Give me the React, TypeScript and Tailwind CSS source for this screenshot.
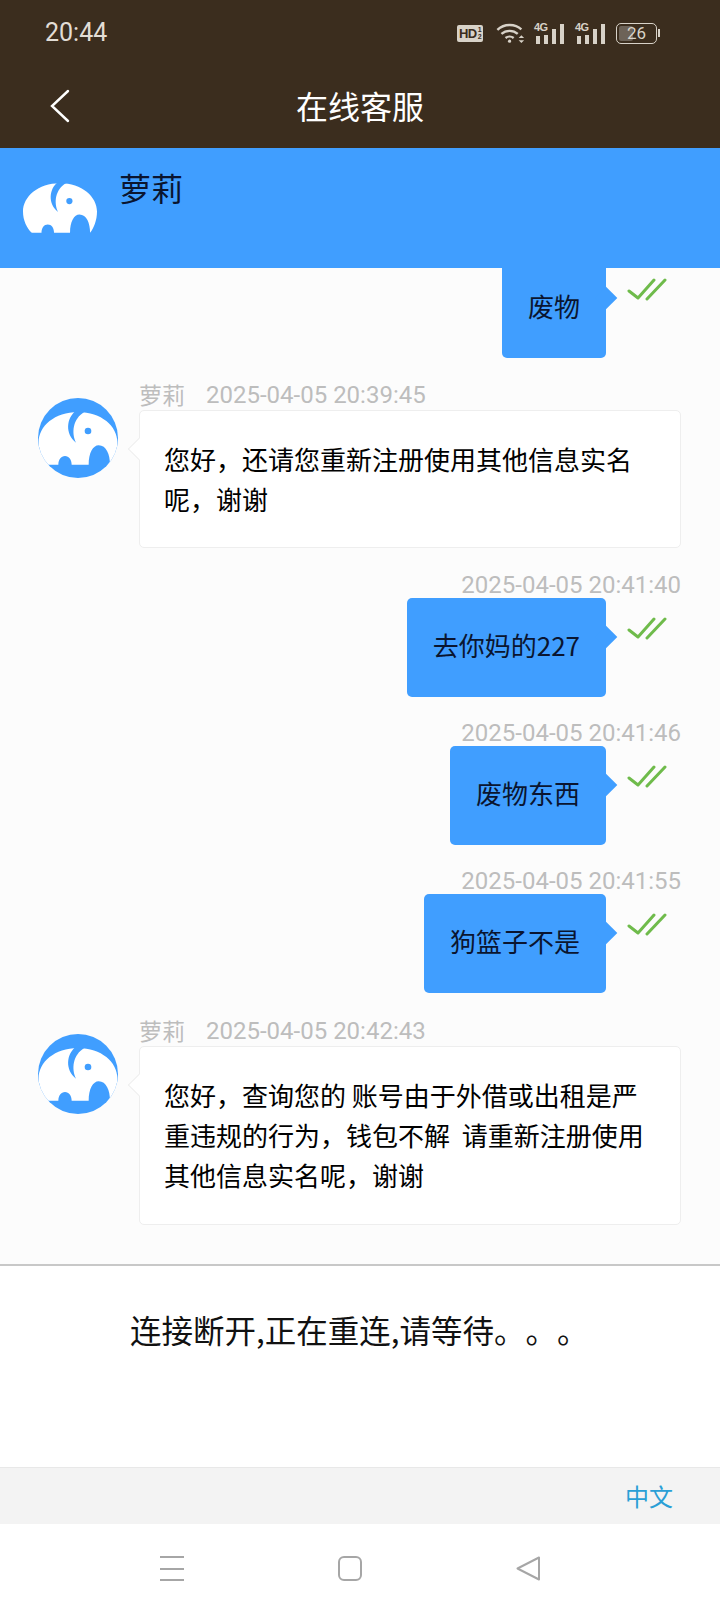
import React from "react";

const cjk = { fontFamily: '"Noto Sans CJK SC", "Noto Sans", sans-serif' };
const BLUE = "#409eff";

const BODY =
  "M2 132C2 85 50 42 120 42C190 42 238 85 238 132C238 160 228 185 216 200C216 170 205 142 182 142C165 142 152 165 152 200L101 200C101 185 93 174 81 174C69 174 61 185 61 200L30 200C14 185 2 160 2 132Z";
const EAR = "M112 40C86 60 80 108 114 134C100 104 104 62 140 41Z";

function ElephantAvatar() {
  return (
    <svg width="80" height="80" viewBox="0 0 240 240" className="shrink-0 rounded-full overflow-hidden bg-[#409eff]">
      <path d={BODY} fill="#fff" />
      <path d={EAR} fill={BLUE} />
      <circle cx="150" cy="99" r="10" fill={BLUE} />
    </svg>
  );
}

function ElephantMark() {
  return (
    <svg width="74" height="54" viewBox="2 42 236 158" className="shrink-0">
      <path d={BODY} fill="#fff" />
      <path d={EAR} fill={BLUE} />
      <circle cx="150" cy="99" r="10" fill={BLUE} />
    </svg>
  );
}

function DoubleCheck() {
  return (
    <svg width="40" height="26" viewBox="0 0 40 26" fill="none" stroke="#6fbb4b" strokeWidth="3" strokeLinecap="round" strokeLinejoin="round">
      <path d="M2 14L11 21L27 3" />
      <path d="M20 22L38 3" />
    </svg>
  );
}

function Signal() {
  return (
    <div className="relative w-[30px] h-[21px]">
      <span className="absolute left-0 top-[-1px] text-[11px] leading-[11px] font-bold tracking-[-0.5px] text-[#d8d2c8]" style={{ fontFamily: '"Liberation Sans", sans-serif' }}>
        4G
      </span>
      <svg width="30" height="21" viewBox="0 0 30 21" fill="#d8d2c8" className="absolute left-0 top-0">
        <rect x="2" y="13" width="4" height="8" />
        <rect x="10" y="12" width="4" height="9" />
        <rect x="18" y="6" width="4" height="15" />
        <rect x="26" y="1" width="4" height="20" />
      </svg>
    </div>
  );
}

function StatusBar() {
  return (
    <div className="h-[66px] flex items-center justify-between pl-[45px] pr-[60px]">
      <span className="text-[25px] text-[#e2ddd6]" style={{ fontFamily: "Roboto, sans-serif" }}>
        20:44
      </span>
      <div className="flex items-center">
        <div className="w-[26px] h-[17px] rounded-[2px] bg-[#d8d2c8] flex items-center justify-center text-[#3b2d1e] text-[13px] font-bold tracking-[-0.5px] leading-none" style={{ fontFamily: '"Liberation Sans", sans-serif' }}>
          HD
          <span className="flex flex-col text-[7px] leading-[7px] ml-[1px]">
            <span>1</span>
            <span>2</span>
          </span>
        </div>
        <svg width="29" height="22" viewBox="0 0 32 24" fill="none" stroke="#d8d2c8" strokeWidth="2.6" className="ml-[13px]">
          <path d="M1.5 8.5C9 1.5 21 1.5 28 8" />
          <path d="M6 13C11 8.5 19 8.5 24 13" />
          <path d="M10.5 17.5C13 15.5 17 15.5 19.5 17.5" />
          <circle cx="15" cy="21" r="1.8" fill="#d8d2c8" stroke="none" />
          <path d="M25 17.5L28 14.5L31 17.5Z M25 20L28 23L31 20Z" fill="#d8d2c8" stroke="none" />
        </svg>
        <div className="ml-[9px]"><Signal /></div>
        <div className="ml-[11px]"><Signal /></div>
        <div className="ml-[11px] flex items-center">
          <div className="w-[41px] h-[21px] rounded-[5px] border-[1.5px] border-[#d8d2c8] p-[2px] relative">
            <div className="h-full w-[40%] bg-[#6d6358] rounded-[2px]" />
            <span className="absolute inset-0 flex items-center justify-center text-[17px] leading-none text-[#d8d2c8]" style={{ fontFamily: "Roboto, sans-serif" }}>
              26
            </span>
          </div>
          <div className="w-[2px] h-[8px] ml-[1px] bg-[#d8d2c8]" />
        </div>
      </div>
    </div>
  );
}

function TitleBar() {
  return (
    <div className="h-[82px] relative flex items-center justify-center pb-[4px]">
      <svg width="22" height="34" viewBox="0 0 22 34" fill="none" stroke="#fff" strokeWidth="2.4" strokeLinecap="round" className="absolute left-[49px] top-[23px]">
        <path d="M19 2L3 17L19 32" />
      </svg>
      <span className="text-[32px] leading-none text-white" style={cjk}>
        在线客服
      </span>
    </div>
  );
}

function Outgoing({ time, text }: { time?: string; text: string }) {
  return (
    <div className="flex flex-col pr-[39px]">
      {time && (
        <div className="h-[30px] leading-[34px] text-[24px] text-[#bdbdbd] text-right" style={{ fontFamily: "Roboto, sans-serif" }}>
          {time}
        </div>
      )}
      <div className="flex justify-end">
        <div className="relative h-[99px] rounded-[5px] bg-[#409eff] px-[26px] pb-[6px] flex items-center text-[26px] text-[#0a1530]" style={cjk}>
          {text}
          <span className="absolute right-[-8px] top-[31px] w-[16px] h-[16px] rotate-45 bg-[#409eff]" />
        </div>
        <div className="w-[75px] pl-[21px] pt-[18px]">
          <DoubleCheck />
        </div>
      </div>
    </div>
  );
}

function Incoming({ time, lines, height }: { time: string; lines: string[]; height: string }) {
  return (
    <div className="flex pl-[38px] pr-[39px]">
      <div className="pt-[18px]">
        <ElephantAvatar />
      </div>
      <div className="ml-[21px] flex-1">
        <div className="h-[30px] text-[24px] text-[#bdbdbd] flex items-start" style={{ fontFamily: "Roboto, sans-serif" }}>
          <span className="text-[23px] leading-[28px]" style={cjk}>萝莉</span>
          <span className="ml-[21px] leading-[30px]">{time}</span>
        </div>
        <div className={`relative rounded-[5px] border-[1.5px] border-[#eeeeee] bg-white pl-[24px] pr-[18px] pt-[28px] text-[26px] leading-[40px] text-black ${height}`} style={cjk}>
          <span className="absolute left-[-9px] top-[30px] w-[16px] h-[16px] rotate-45 bg-white border-l-[1.5px] border-b-[1.5px] border-[#eeeeee]" />
          {lines.map((line) => (
            <div key={line} className="whitespace-pre">
              {line}
            </div>
          ))}
        </div>
      </div>
    </div>
  );
}

function NavBar() {
  return (
    <div className="h-[88px] bg-white flex items-start pt-[32px]">
      <div className="flex w-full pl-[160px] gap-[154px]">
        <svg width="24" height="25" viewBox="0 0 24 25" fill="#a6a6a6">
          <rect x="0" y="0" width="24" height="2" />
          <rect x="0" y="12" width="24" height="2" />
          <rect x="0" y="23" width="24" height="2" />
        </svg>
        <svg width="24" height="25" viewBox="0 0 24 25" fill="none" stroke="#a6a6a6" strokeWidth="2">
          <rect x="1" y="1" width="22" height="23" rx="5" />
        </svg>
        <svg width="24" height="25" viewBox="0 0 24 25" fill="none" stroke="#a6a6a6" strokeWidth="2" strokeLinejoin="round">
          <path d="M23 1.5L23 23.5L1.5 12.5Z" />
        </svg>
      </div>
    </div>
  );
}

export default function App() {
  return (
    <div className="w-[720px] h-[1612px] flex flex-col overflow-hidden bg-white [text-spacing-trim:space-all]">
      <div className="bg-[#3b2d1e] h-[148px] shrink-0">
        <StatusBar />
        <TitleBar />
      </div>
      <div className="h-[120px] shrink-0 bg-[#409eff] flex relative z-10">
        <div className="pl-[23px] pt-[33px]">
          <ElephantMark />
        </div>
        <div className="ml-[22px] pt-[18px] text-[32px] leading-[42px] text-[#0a1530]" style={cjk}>
          萝莉
        </div>
      </div>
      <div className="h-[998px] shrink-0 bg-[#fcfcfc] border-b-[2px] border-[#c8c8c8] overflow-hidden">
        <div className="-mt-[9px] flex flex-col">
          <Outgoing text="废物" />
          <div className="h-[22px]" />
          <Incoming time="2025-04-05 20:39:45" height="h-[138px]" lines={["您好\uFF0C还请您重新注册使用其他信息实名", "呢\uFF0C谢谢"]} />
          <div className="h-[20px]" />
          <Outgoing time="2025-04-05 20:41:40" text="去你妈的227" />
          <div className="h-[19px]" />
          <Outgoing time="2025-04-05 20:41:46" text="废物东西" />
          <div className="h-[19px]" />
          <Outgoing time="2025-04-05 20:41:55" text="狗篮子不是" />
          <div className="h-[23px]" />
          <Incoming time="2025-04-05 20:42:43" height="h-[179px]" lines={["您好\uFF0C查询您的 账号由于外借或出租是严", "重违规的行为\uFF0C钱包不解  请重新注册使用", "其他信息实名呢\uFF0C谢谢"]} />
        </div>
      </div>
      <div className="h-[201px] shrink-0 bg-white pl-[130px] pt-[39px] text-[31.5px] leading-[48px] text-[#111]" style={cjk}>
        连接断开,正在重连,请等待。。。
      </div>
      <div className="h-[57px] shrink-0 bg-[#f3f3f3] border-t border-[#e8e8e8] flex items-center justify-end pr-[47px] text-[24px] text-[#2a9fd6]" style={cjk}>
        中文
      </div>
      <NavBar />
    </div>
  );
}
